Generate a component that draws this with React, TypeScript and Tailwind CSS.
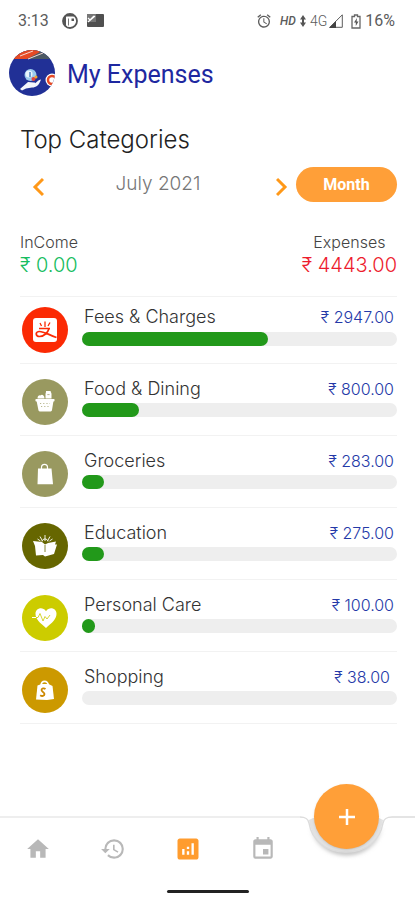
import type { ReactNode } from "react";
import { MdAlarm, MdAnalytics, MdEvent, MdHistory, MdHome } from "react-icons/md";

function TransferIcon() {
  return (
    <svg viewBox="0 0 24 24" className="size-6" aria-hidden="true">
      <rect width="24" height="24" rx="3" fill="#fff" />
      <path d="M7 5l1.500 3M12 3.500V9M17 4.500L15 8M6 10.500h11" fill="none" stroke="#fb2a04" strokeWidth="1.300" />
      <path d="M16 10.500c-1 4-5 8-9.500 8-4 0-4.500-4.500-.5-5 4-.4 8 2.500 17.500 6" fill="none" stroke="#fb2a04" strokeWidth="1.700" />
    </svg>
  );
}

function BasketIcon() {
  return (
    <svg viewBox="0 0 24 24" className="size-6" fill="#fff" aria-hidden="true">
      <path d="M3 9h18c.8 0 .8 2.400 0 2.400h-.6L19 20c-.1.800-.6 1.400-1.400 1.400H6.800c-.8 0-1.300-.6-1.400-1.400l-1.700-8.600H3c-.8 0-.8-2.400 0-2.400z" />
      <path d="M12.500 8.400V4c0-.6.500-1.200.5-3h4.600c0 1.200.9 1.500.9 3v4.400zM4.500 8.400c0-2.400 1.500-3.400 3-3 1-1.500 4-.9 4 3z" />
      <path d="M14.300 4.600h2.300" stroke="#999960" strokeWidth=".7" />
      <path d="M7 13.500h10M8 16.500h8" stroke="#999960" strokeWidth=".7" strokeDasharray="1.200 2" />
    </svg>
  );
}

function BagIcon() {
  return (
    <svg viewBox="0 0 24 24" className="size-6" aria-hidden="true">
      <path d="M5 6.500h13.500L20 22.300H4.500z" fill="#fff" />
      <path d="M8.500 9V5.500c0-4.200 6-4.200 6 0V9" fill="none" stroke="#fff" strokeWidth="1.200" />
    </svg>
  );
}

function BookIcon() {
  return (
    <svg viewBox="0 0 28 28" className="size-7" aria-hidden="true">
      <path d="M2 9l9 1 3 2.500 3-1.500 8-1.500-1 3h2l-3 9.500-9 2.500-2-1.500-7 .5L4 14z" fill="#fff" />
      <path d="M14 13v7" stroke="#666600" strokeWidth=".8" fill="none" />
      <path d="M14 9V3M11.500 9L9 4.500M16.500 9L19 4.500M9.500 9L6.500 7M18.500 9l3-2" stroke="#fff" strokeWidth=".9" />
      <path d="M11 9.500c.5-3.400 5.500-3.400 6 0" fill="none" stroke="#fff" strokeWidth=".9" />
    </svg>
  );
}

function HeartIcon() {
  return (
    <svg viewBox="0 0 26 26" className="size-[26px]" aria-hidden="true">
      <path d="M14 23C8 18 3.500 14 3.500 8.800c0-5.600 7-7.800 10.500-2.600 3.500-5.200 10.500-3 10.500 2.600C24.500 14 20 18 14 23z" fill="#fff" />
      <path d="M3 12.500h3l2-4 3 7.500 2-4.500 2 2.500 3-4" fill="none" stroke="#cccc00" strokeWidth=".8" />
      <path d="M0 12.500h4" stroke="#fff" strokeWidth="1" />
    </svg>
  );
}

function ShopIcon() {
  return (
    <svg viewBox="0 0 22 22" className="size-[22px]" aria-hidden="true">
      <path d="M3.500 6.500l4-1.500h7l4 2L20 20l-7 1-11-.5z" fill="#fff" />
      <path d="M7 6.500c.5-5.500 6.500-5.500 7.500 0" fill="none" stroke="#fff" strokeWidth="1.600" />
      <path d="M11.500 10c-1.500-1.200-4-.9-4 1.100 0 1.800 3 2 3 4 0 2-2.500 2.400-4.300 1.200" fill="none" stroke="#cc8800" strokeWidth="1.800" />
    </svg>
  );
}

type Category = { name: string; amount: string; share: number; disc: string; icon: ReactNode };

const categories: Category[] = [
  { name: "Fees & Charges", amount: "2947.00", share: 59, disc: "bg-[#fb2a04]", icon: <TransferIcon /> },
  { name: "Food & Dining", amount: "800.00", share: 18, disc: "bg-[#999960]", icon: <BasketIcon /> },
  { name: "Groceries", amount: "283.00", share: 7, disc: "bg-[#999960]", icon: <BagIcon /> },
  { name: "Education", amount: "275.00", share: 7, disc: "bg-[#666600]", icon: <BookIcon /> },
  { name: "Personal Care", amount: "100.00", share: 4, disc: "bg-[#cccc00]", icon: <HeartIcon /> },
  { name: "Shopping", amount: "38.00", share: 0, disc: "bg-[#cc9900]", icon: <ShopIcon /> },
];

function StatusBar() {
  return (
    <div className="flex h-[42px] items-center justify-between pr-5 pl-[18px] font-[Roboto,sans-serif] text-base text-[#5c5c5c]">
      <div className="flex items-center">
        <span className="w-11">3:13</span>
        <svg viewBox="0 0 16 16" className="size-4" aria-hidden="true">
          <circle cx="8" cy="8" r="7" fill="#fff" stroke="#555" strokeWidth="1.800" />
          <path d="M8 1a7 7 0 0 0-4 12.700V3.500h8.500A7 7 0 0 0 8 1z" fill="#555" />
          <path d="M5 4.500h7v4H8.500v5H5z" fill="#fff" />
          <path d="M6.500 5.500v7" stroke="#777" strokeWidth="1" />
          <path d="M9.500 5.500H12v2.500H9.500z" fill="#555" />
        </svg>
        <svg viewBox="0 0 17 14" className="ml-[9px] h-[14px] w-[17px]" aria-hidden="true">
          <rect width="17" height="13" rx="1" fill="#505050" />
          <path d="M0 0h9v8H0z" fill="#777" />
          <path d="M1 8l7-6M1 4l2 2 4-4" fill="none" stroke="#fff" strokeWidth="1.200" />
        </svg>
      </div>
      <div className="flex items-center">
        <MdAlarm className="size-4" />
        <span className="ml-2 text-xs font-medium italic">HD</span>
        <svg viewBox="0 0 6 12" className="mx-1 h-3 w-[6px]" fill="#555" aria-hidden="true">
          <path d="M3 0l3 4.500H4v3h2L3 12 0 7.500h2v-3H0z" />
        </svg>
        <span className="text-sm font-light">4G</span>
        <svg viewBox="0 0 14 14" className="ml-[2px] size-[14px]" aria-hidden="true">
          <path d="M.8 13.300H13.300V.8z" fill="none" stroke="#5c5c5c" strokeWidth="1" />
          <path d="M0 14h7V7z" fill="#444" />
        </svg>
        <svg viewBox="0 0 10 15" className="mr-1 ml-2 h-[15px] w-[10px]" aria-hidden="true">
          <path d="M1 2.500h2.500V1h3v1.500H9V14H1z" fill="none" stroke="#666" strokeWidth="1.300" />
          <path d="M6 4L3 8.500h1.800V12L7.500 7.500H5.600z" fill="#555" />
        </svg>
        <span>16%</span>
      </div>
    </div>
  );
}

function Avatar() {
  return (
    <svg viewBox="0 0 46 46" className="size-[46px]" role="img" aria-label="Profile">
      <defs>
        <clipPath id="disc"><circle cx="23" cy="23" r="23" /></clipPath>
      </defs>
      <g clipPath="url(#disc)">
        <rect width="46" height="46" fill="#213096" />
        <path d="M0 0h46v9H0z" fill="#4c5963" />
        <path d="M0 9L14 0h15l2 2L18 9z" fill="#e64a25" />
        <path d="M19 9L34 3M11 6l13-5" stroke="#f6d8d0" strokeWidth="1" />
        <circle cx="21.500" cy="25" r="6" fill="#9bcbed" />
        <circle cx="20" cy="24" r="3.500" fill="#e8f5fb" />
        <path d="M21 22v5" stroke="#3470b8" strokeWidth="1.300" />
        <circle cx="24.500" cy="29" r="2" fill="#e3433b" />
        <circle cx="27" cy="27" r="1.500" fill="#f1a92d" />
        <path d="M11 39l8-7 6 .5c2 0 1 2-1 2 3-1 5-5 8-5-2 6-5 8-9 8l-6 1-4 2z" fill="#f4f6fb" />
        <circle cx="43" cy="30" r="6.500" fill="#fff" />
        <circle cx="43" cy="30" r="4" fill="none" stroke="#e64a25" strokeWidth="2.500" />
      </g>
    </svg>
  );
}

function Chevron({ d }: { d: string }) {
  return (
    <svg viewBox="0 0 12 20" className="h-5 w-3" fill="none" stroke="#ff9818" strokeWidth="3" aria-hidden="true">
      <path d={d} />
    </svg>
  );
}

function CategoryRow({ name, amount, share, disc, icon }: Category) {
  return (
    <li className="flex h-[72px] items-center gap-[14px] border-b border-[#f2f2f2] pt-1 pl-[2px] first:h-[67px] first:pt-0">
      <div className={"flex size-[46px] shrink-0 items-center justify-center rounded-full text-white " + disc}>{icon}</div>
      <div className="flex-1 pb-[10px]">
        <div className="flex h-[27px] items-center justify-between pr-[3px] pb-[2px] pl-[2px]">
          <span className="text-lg font-light text-[#333]">{name}</span>
          <span className={"text-base font-light text-[#2439a8]" + (share === 0 ? " pr-1" : "")}>₹ {amount}</span>
        </div>
        <div className="h-[14px] rounded-full bg-[#eee]">
          <div className="h-full rounded-full bg-[#22991a]" style={{ width: share + "%" }} />
        </div>
      </div>
    </li>
  );
}

function BottomNav() {
  const item = "flex flex-1 items-center justify-center";
  return (
    <footer className="relative mt-auto h-[84px]">
      <div className="mr-[115px] h-[2px] bg-[#eee]" />
      <svg viewBox="0 0 115 60" className="absolute top-0 right-0 h-[60px] w-[115px]" fill="none" aria-hidden="true">
        <defs>
          <filter id="soft" x="-20%" y="-20%" width="140%" height="150%"><feGaussianBlur stdDeviation="2" /></filter>
        </defs>
        <path d="M11 11a36 34 0 0 0 71 0a38 36 0 0 1-71 0" fill="#bbb" filter="url(#soft)" />
        <path d="M9 4c3 20 16 32 37 32S80 24 83 4l-4-2H13z" fill="#e2e2e2" />
        <path d="M0 1c6 0 8 2 9 6 3 18 17 29 37 29s34-11 37-29c1-4 3-6 9-6h23" stroke="#dcdcdc" strokeWidth="1.500" />
      </svg>
      <button type="button" aria-label="Add expense" className="absolute -top-8 right-9 flex size-[65px] items-center justify-center rounded-full bg-[#ff9f38] shadow-sm">
        <svg viewBox="0 0 18 18" className="size-[18px]" stroke="#fff" strokeWidth="2.500" aria-hidden="true"><path d="M9 1v16M1 9h16" /></svg>
      </button>
      <nav className="mr-[115px] flex h-[62px] text-[#b8b8b8]">
        <a href="#home" aria-label="Home" className={item}><MdHome className="size-[26px]" /></a>
        <a href="#history" aria-label="History" className={item}><MdHistory className="size-[26px]" /></a>
        <a href="#analytics" aria-label="Analytics" className={item + " text-[#ff9c2e]"}><MdAnalytics className="size-7" /></a>
        <a href="#calendar" aria-label="Calendar" className={item}><MdEvent className="size-[26px]" /></a>
      </nav>
      <div className="mx-auto mt-[10px] h-[3px] w-[82px] rounded-full bg-[#222]" />
    </footer>
  );
}

export default function App() {
  return (
    <div className="flex min-h-screen flex-col bg-white font-[Inter,sans-serif]">
      <StatusBar />
      <header className="flex h-[62px] items-center gap-3 pl-[9px]">
        <Avatar />
        <h1 className="pt-1 font-[Roboto,sans-serif] text-[25px] text-[#1e28a0]">My Expenses</h1>
      </header>
      <main className="pr-[18px] pl-5">
        <h2 className="mt-5 text-2xl leading-8 font-light text-[#222]">Top Categories</h2>
        <div className="mt-[11px] flex h-[35px] items-center">
          <button type="button" aria-label="Previous month" className="mt-1 ml-3"><Chevron d="M11 2L3 10l8 8" /></button>
          <span className="flex-1 pr-4 pl-3 text-center text-[19px] font-light text-[#777]">July 2021</span>
          <button type="button" aria-label="Next month" className="mt-1 mr-2"><Chevron d="M1 2l8 8-8 8" /></button>
          <button type="button" className="h-[35px] w-[101px] rounded-full bg-[#ff9f38] font-[Roboto,sans-serif] text-base font-bold text-white">Month</button>
        </div>
        <div className="mt-[30px] flex justify-between">
          <div>
            <div className="text-base leading-5 font-light text-[#444]">InCome</div>
            <div className="text-xl leading-[26px] font-light text-[#16bd60]">₹ 0.00</div>
          </div>
          <div className="text-center">
            <div className="text-base leading-5 font-light text-[#444]">Expenses</div>
            <div className="text-xl leading-[26px] font-light text-[#ed1c2e]">₹ 4443.00</div>
          </div>
        </div>
        <ul className="mt-[18px] border-t border-[#f2f2f2]">
          {categories.map((c) => <CategoryRow key={c.name} {...c} />)}
        </ul>
      </main>
      <BottomNav />
    </div>
  );
}
